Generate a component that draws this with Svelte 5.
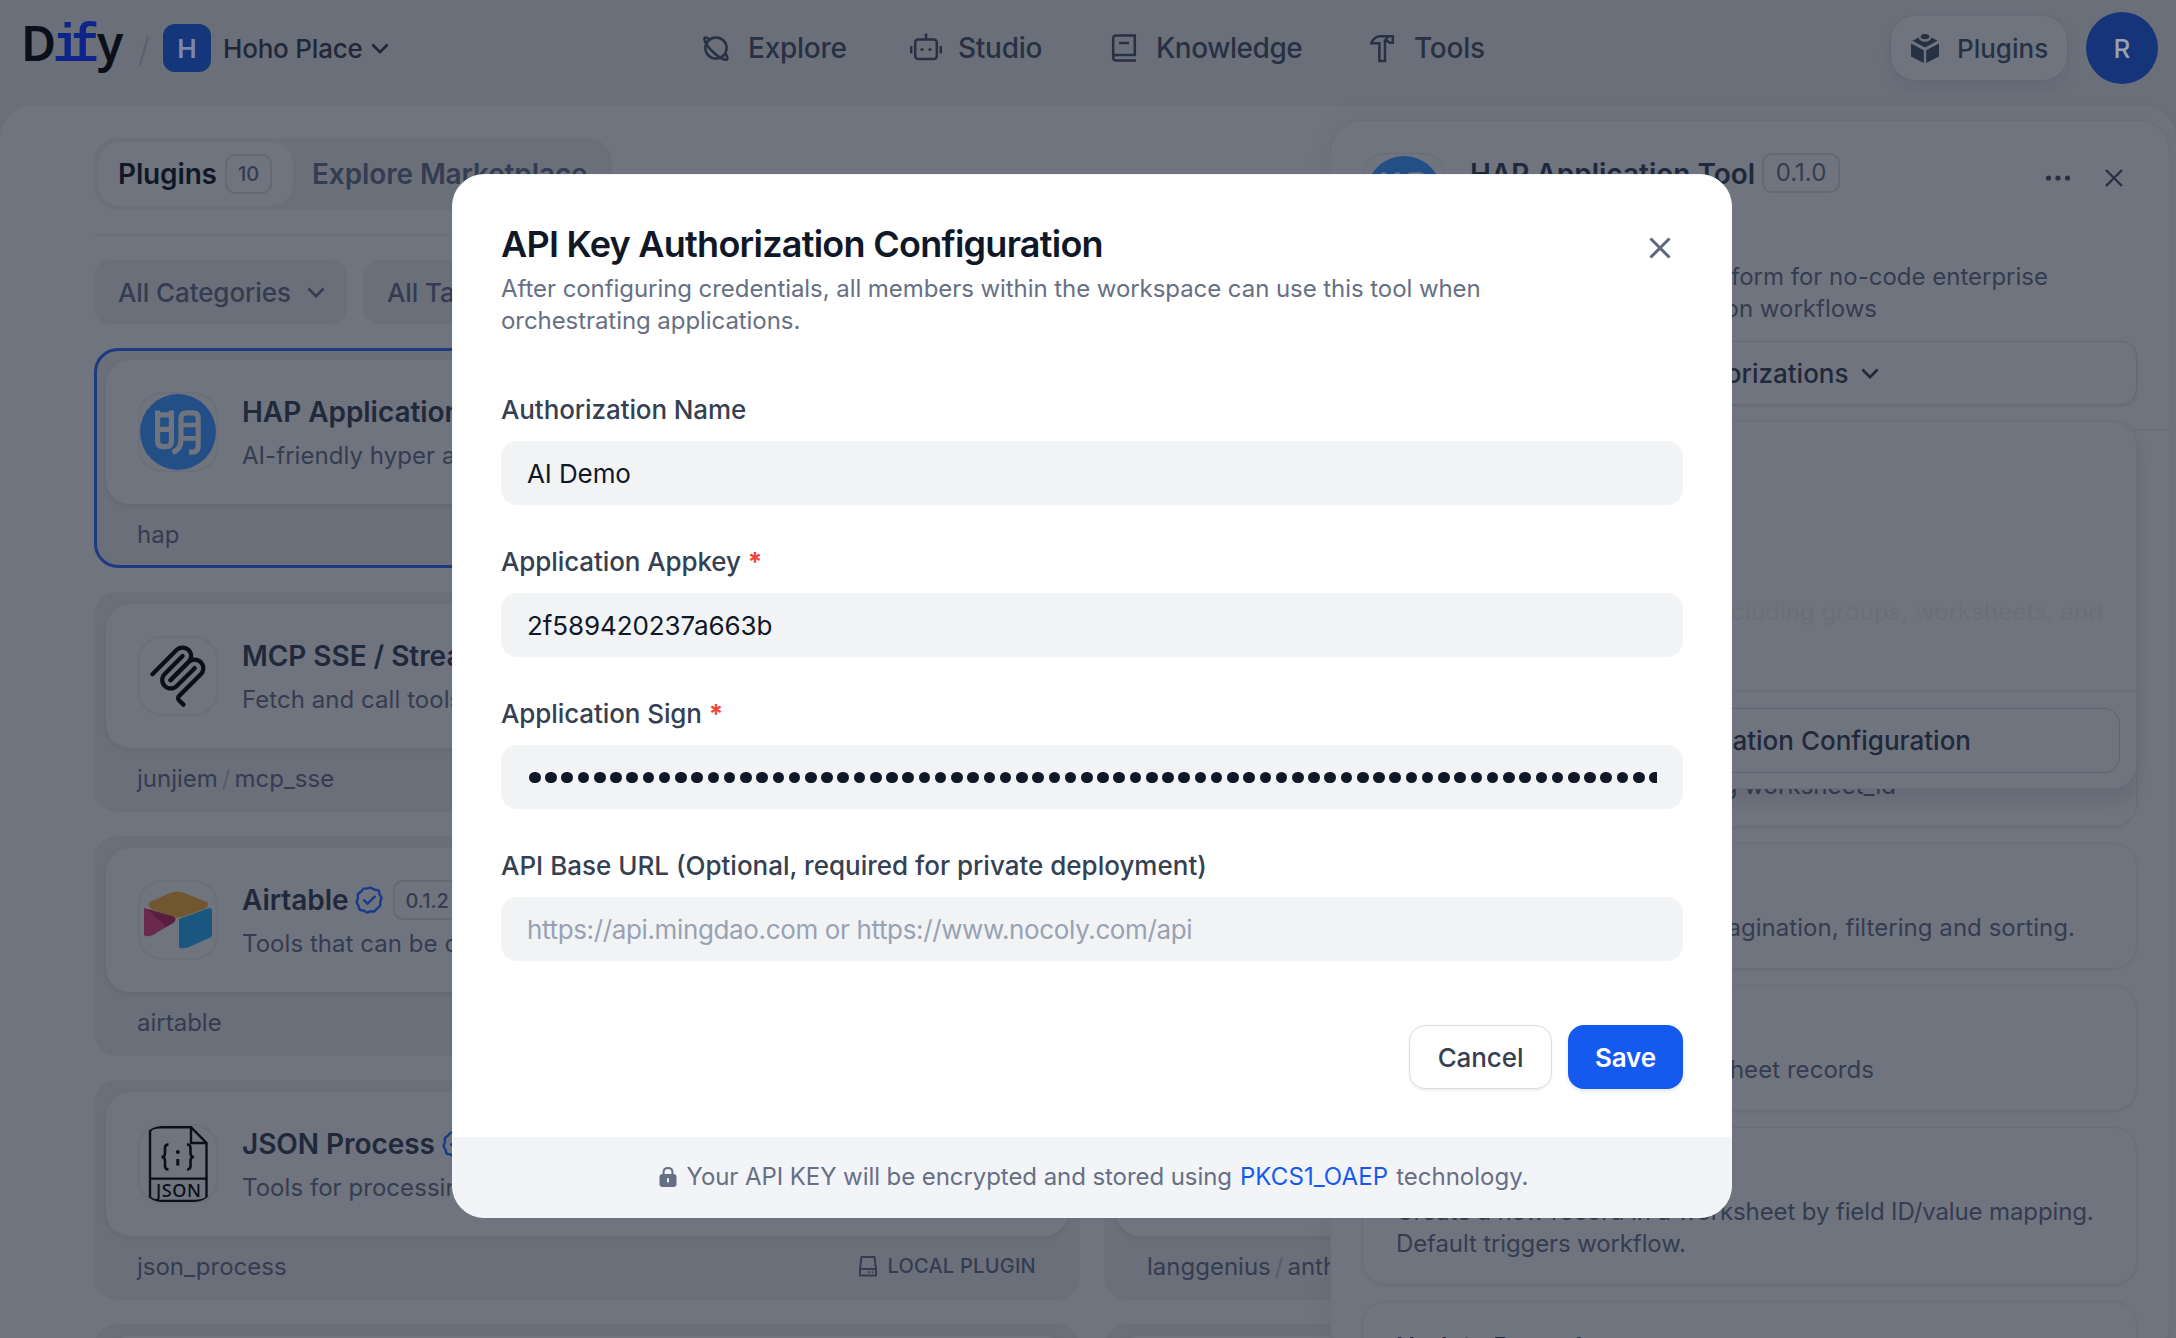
<script>
  const plugins = [
    { icon: 'hap', title: 'HAP Application Tool', version: '0.1.0', desc: 'AI-friendly hyper application platform', path: ['hap'], active: true },
    { icon: '', title: 'OpenAI', version: '0.2.3', desc: 'Models provided by OpenAI', path: ['langgenius', 'openai'] },
    { icon: 'mcp', title: 'MCP SSE / StreamableHTTP', version: '0.2.2', desc: 'Fetch and call tools from MCP servers', path: ['junjiem', 'mcp_sse'] },
    { icon: '', title: 'Gemini', version: '0.2.8', desc: 'Models provided by Google', path: ['langgenius', 'gemini'] },
    { icon: 'airtable', title: 'Airtable', verified: true, version: '0.1.2', desc: 'Tools that can be operated on Airtable', path: ['airtable'] },
    { icon: '', title: 'DeepSeek', version: '0.0.6', desc: 'Models provided by DeepSeek', path: ['langgenius', 'deepseek'] },
    { icon: 'json', title: 'JSON Process', verified: true, version: '0.0.2', desc: 'Tools for processing JSON content', path: ['json_process'], local: true },
    { icon: '', title: 'Anthropic', version: '0.1.1', desc: 'Models provided by Anthropic', path: ['langgenius', 'anthropic'] },
    { icon: '', title: '', version: '', desc: '', path: [] },
    { icon: '', title: '', version: '', desc: '', path: [] }
  ];
  const actions = [
    { title: 'Get Worksheet Structure', lines: ['Get the field structure of a worksheet,', 'including worksheet_id'], end: 1895 },
    { title: 'Query Records', lines: ['List records with pagination, filtering and sorting.'], end: 2074 },
    { title: 'Count Records', lines: ['Get the total number of worksheet records'], end: 1873 },
    { title: 'Create Record', lines: ['Create a new record in a worksheet by field ID/value mapping.', 'Default triggers workflow.'] },
    { title: 'Update Record', lines: ['Update fields of a record.'] }
  ];
  const dots = Array.from({ length: 70 });
</script>

{#snippet chevron()}
  <svg class="chev" viewBox="0 0 24 24" width="28" height="28"><path d="M5.5 9 L12 15.5 L18.5 9" /></svg>
{/snippet}

{#snippet hapIcon()}
  <svg viewBox="0 0 76 76" width="76" height="76">
    <circle cx="38" cy="38" r="38" fill="#244f86" />
    <g fill="none" stroke="#70747e" stroke-width="5.2">
      <path d="M17.6 16.5 V47 Q17.6 52.6 23 52.6 H26 Q31.4 52.6 31.4 47 V16.5" />
      <path d="M15.5 20.8 H33.5 M18 35.4 H31" />
      <path d="M32.5 58.4 Q41 55.5 41 46 V24.5 Q41 18.8 46.4 18.8 H53 Q58.2 18.8 58.2 24.5 V52 Q58.2 58 52 58.2 H49" />
      <path d="M41 31 H58 M41 44.4 H58" stroke-width="4.6" />
    </g>
  </svg>
{/snippet}

{#snippet verified()}
  <svg class="verified" viewBox="0 0 28 28" width="28" height="28">
    <path d="M14 1.9 Q16.4 1.2 18 3 Q20 4.1 21.9 3.9 Q24.4 4.2 24.2 6.8 Q24.4 8.8 25.7 10.3 Q27.2 12.2 25.8 14 Q24.9 15.9 25.3 18 Q25.6 20.5 23.3 21.4 Q21.5 22.5 20.6 24.2 Q19.3 26.3 17 25.4 Q15.4 25 14 25.9 Q11.9 27.2 10.2 25.5 Q8.8 24.2 6.8 24.2 Q4.3 24.2 3.9 21.8 Q3.9 19.9 2.6 18.1 Q1 16.2 2.3 14 Q3.3 12.1 2.8 10.2 Q2.4 7.7 4.6 6.6 Q6.5 5.5 7.4 3.9 Q8.9 1.8 11.2 2.6 Q12.8 2.8 14 1.9 Z" />
    <path d="M8.4 13.6 L12.6 17.6 L20.4 9.8" />
  </svg>
{/snippet}

{#snippet pluginIcon(name)}
  {#if name === 'hap'}
    {@render hapIcon()}
  {:else if name === 'mcp'}
    <svg viewBox="0 0 180 180" width="64" height="64" fill="none" stroke="#0a0f1a" stroke-width="12" stroke-linecap="round">
      <path d="M18 84.85 L85.88 16.97 C95.25 7.6 110.45 7.6 119.82 16.97 C129.2 26.34 129.2 41.54 119.82 50.91 L68.56 102.18" />
      <path d="M69.27 101.47 L119.82 50.91 C129.2 41.54 144.39 41.54 153.77 50.91 L154.12 51.27 C163.49 60.64 163.49 75.83 154.12 85.21 L92.72 146.6 C89.6 149.72 89.6 154.79 92.72 157.91 L105.33 170.52" />
      <path d="M102.85 33.94 L52.65 84.15 C43.28 93.52 43.28 108.71 52.65 118.09 C62.02 127.46 77.22 127.46 86.59 118.09 L136.79 67.88" />
    </svg>
  {:else if name === 'airtable'}
    <svg viewBox="0 0 76 76" width="76" height="76">
      <path d="M10 20 Q7 23 11 27 L32 35 Q37 36.5 42 35 L64 27 Q70 24 67 20 L44 11 Q37 8.500 30 11 Z" fill="#70572f" />
      <path d="M4 26 L33 34.500 Q38 37 33 41 L13 53 Q4 56 4 52 Z" fill="#6a2a4e" />
      <path d="M7 27 L33 34.500 Q38 37 33 41 L26 45 Z" fill="#571f3d" />
      <path d="M39 37 L69 26 Q72 26 72 29 V52 Q72 55 69 56 L49 65 Q39 68 39 64 Z" fill="#1a5680" />
    </svg>
  {:else if name === 'json'}
    <svg viewBox="0 0 76 76" width="76" height="76" fill="none" stroke="#0a0f1a" stroke-width="2.4">
      <path d="M10 72 V5 Q12 1.200 20 1.200 H51 L66.500 17 V72 Q62 75 56 75 H20 Q14 75 10 72 Z" />
      <path d="M51 1.200 V17 H66.500 M10 52.600 H66.500" />
      <path d="M28.500 18.500 Q25 18.500 25 22 V27 Q25 31 21.500 31 Q25 31 25 35 V40 Q25 43.500 28.500 43.500 M47 18.500 Q50.500 18.500 50.500 22 V27 Q50.500 31 54 31 Q50.500 31 50.500 35 V40 Q50.500 43.500 47 43.500" stroke-width="2.600" />
      <circle cx="37.800" cy="26" r="2" fill="#0a0f1a" stroke="none" />
      <path d="M37.800 33 V39.500" stroke-width="3" />
      <text x="16" y="71" class="json-label" textLength="45">JSON</text>
    </svg>
  {/if}
{/snippet}

<div class="page">
  <header>
    <div class="logo"><span class="d">D</span><span class="if">if</span><span class="y">y</span></div>
    <svg class="slash" viewBox="0 0 12 32" width="12" height="32"><path d="M10 2 L2 30" /></svg>
    <div class="ws-badge">H</div>
    <div class="ws-name">Hoho Place</div>
    {@render chevron()}

    <nav>
      <div class="nav-item explore">
        <svg viewBox="0 0 32 32" width="32" height="32">
          <circle cx="16" cy="16" r="10.600" />
          <path d="M10 7.500 Q4.500 3.600 4.300 7 Q4.800 12 13 20 Q21 27.500 26 27.800 Q29 27.400 25.500 21.500" />
        </svg>
        <span>Explore</span>
      </div>
      <div class="nav-item studio">
        <svg viewBox="0 0 32 32" width="32" height="32">
          <rect x="5.200" y="7.400" width="21.600" height="19.600" rx="3" />
          <path d="M16 7 V3 M1.200 14 V21.500 M30.800 14 V21.500" />
          <circle cx="16" cy="2.800" r="1.500" class="f" /><circle cx="12" cy="17.500" r="1.600" class="f" /><circle cx="20" cy="17.500" r="1.600" class="f" />
        </svg>
        <span>Studio</span>
      </div>
      <div class="nav-item knowledge">
        <svg viewBox="0 0 32 32" width="32" height="32">
          <path d="M28 28.500 H8 Q5.200 28.500 5.200 25.800 V6 Q5.200 3.400 8 3.400 H26.800 V23 H8 Q5.200 23 5.200 25.800 M11 10.900 H21" />
        </svg>
        <span>Knowledge</span>
      </div>
      <div class="nav-item tools">
        <svg viewBox="0 0 32 32" width="32" height="32">
          <path d="M5.200 10.800 Q9 4.200 14 4.200 H26.800 V10.800 H23.500 L21.500 9 H19 V29 H13.400 V11.200 H5.200 Z" />
          <path d="M18.500 9 L22 5" />
        </svg>
        <span>Tools</span>
      </div>
    </nav>

    <div class="plugins-btn">
      <svg viewBox="0 0 32 32" width="32" height="32">
        <path d="M2 11.500 L14.800 18.200 V31 L2 24.500 Z M30 11.500 L17.200 18.200 V31 L30 24.500 Z M3.500 8.800 L9.500 5.500 Q10.500 9.600 16 9.800 Q21.500 9.600 22.500 5.500 L28.500 8.800 L16 15.600 Z" />
        <ellipse cx="16" cy="4.600" rx="4.300" ry="2.700" />
      </svg>
      <span>Plugins</span>
    </div>
    <div class="avatar">R</div>
  </header>

  <main>
    <div class="tabs">
      <div class="tab on"><span class="tab-a">Plugins</span><span class="count">10</span></div>
      <div class="tab off">Explore Marketplace</div>
    </div>
    <div class="rule"></div>
    <div class="filters">
      <div class="filter"><span>All Categories</span>{@render chevron()}</div>
      <div class="filter"><span>All Tags</span>{@render chevron()}</div>
    </div>
    <div class="grid">
      {#each plugins as p}
        <article class:active={p.active}>
          <div class="inner">
            <div class="picon">{@render pluginIcon(p.icon)}</div>
            <div class="ptext">
              <div class="ptitle">
                <span>{p.title}</span>
                {#if p.verified}{@render verified()}{/if}
                {#if p.version}<span class="ver">{p.version}</span>{/if}
              </div>
              <div class="pdesc">{p.desc}</div>
            </div>
          </div>
          <footer>
            <span class="path">{#each p.path as part, i}{#if i}<i>/</i>{/if}<span>{part}</span>{/each}</span>
            {#if p.local}
              <span class="local">
                <svg viewBox="0 0 20 22" width="20" height="22"><path d="M2 14 L3.500 2 H16.500 L18 14 V20.500 H2 Z M2 14 H18" /><path d="M10 17.300 H11.600 M13.600 17.300 H15.200" /></svg>
                LOCAL PLUGIN
              </span>
            {/if}
          </footer>
        </article>
      {/each}
    </div>
  </main>

  <aside>
    <div class="dhead">
      <div class="dicon">{@render hapIcon()}</div>
      <div class="dtitle">HAP Application Tool</div>
      <span class="ver big">0.1.0</span>
      <div class="dtools">
        <svg viewBox="0 0 28 8" width="28" height="8"><circle cx="4.500" cy="4" r="2.600" /><circle cx="14" cy="4" r="2.600" /><circle cx="23.500" cy="4" r="2.600" /></svg>
        <svg class="x" viewBox="0 0 20 20" width="20" height="20"><path d="M2 2 L18 18 M18 2 L2 18" /></svg>
      </div>
    </div>
    <div class="ddesc">
      <div class="l1">AI-friendly hyper application platform for no-code enterprise</div>
      <div class="l2">development and automation workflows</div>
    </div>
    <div class="auth"><span>Authorizations</span>{@render chevron()}</div>
    <div class="drule"></div>
    <div class="actions">
      {#each actions as a}
        <section>
          <h4>{a.title}</h4>
          {#each a.lines as l}
            <p><span class:right={a.end} style:width={a.end ? `${a.end - 1395}px` : null}>{l}</span></p>
          {/each}
        </section>
      {/each}
    </div>
    <div class="pop">
      <div class="pop-body">Get application info, including groups, worksheets, and</div>
      <div class="pop-foot"><div class="pop-btn"><span>API Key Authorization Configuration</span></div></div>
    </div>
  </aside>

  <div class="modal" role="dialog">
    <div class="body">
      <div class="mhead">
        <div>
          <h2>API Key Authorization Configuration</h2>
          <div class="sub">After configuring credentials, all members within the workspace can use this tool when<br />orchestrating applications.</div>
        </div>
        <svg viewBox="0 0 24 24" width="24" height="24"><path d="M2.500 2.500 L21.500 21.500 M21.500 2.500 L2.500 21.500" /></svg>
      </div>
      <div class="label">Authorization Name</div>
      <div class="input">AI Demo</div>
      <div class="label">Application Appkey <b>*</b></div>
      <div class="input">2f589420237a663b</div>
      <div class="label">Application Sign <b>*</b></div>
      <div class="input"><div class="dots">{#each dots as _}<i></i>{/each}</div></div>
      <div class="label long">API Base URL (Optional, required for private deployment)</div>
      <div class="input ph">https://api.mingdao.com or https://www.nocoly.com/api</div>
      <div class="btns">
        <button class="cancel">Cancel</button>
        <button class="save">Save</button>
      </div>
    </div>
    <div class="mfoot">
      <svg viewBox="0 0 18 22" width="18" height="22"><path d="M4.600 9 V6 Q4.600 2 9 2 Q13.400 2 13.400 6 V9" fill="none" stroke="#676f83" stroke-width="2" /><rect x="0.500" y="8" width="17" height="13" rx="3" fill="#676f83" /><rect x="8" y="12" width="2" height="4.600" rx="1" fill="#f2f4f8" /></svg>
      <span class="f1">Your API KEY will be encrypted and stored using</span>
      <a href="#top">PKCS1_OAEP</a>
      <span class="f3">technology.</span>
    </div>
  </div>
</div>

<style>
  :global(body) { margin: 0; background: #6b6f7a; }
  * { box-sizing: border-box; }
  .page { position: relative; width: 2176px; height: 1338px; overflow: hidden; background: #6b6f7a; font-family: Inter, "Noto Sans", sans-serif; font-size: 26px; color: #343c51; white-space: nowrap; }

  .chev { flex: none; fill: none; stroke: currentColor; stroke-width: 2.3; }

  header { display: flex; align-items: center; height: 96px; padding: 0 18px 0 21px; color: #273144; }
  .logo { display: flex; align-items: baseline; width: 117px; height: 58px; line-height: 58px; font-size: 48px; color: #0a0f1a; margin-top: -11px; }
  .logo .d { font-family: "Noto Sans", sans-serif; font-weight: 600; width: 32px; }
  .logo .if { position: relative; font-family: "Liberation Mono", monospace; font-weight: 700; font-size: 54px; letter-spacing: -11px; width: 44px; color: #0f2488; transform: scaleX(0.85); transform-origin: left; }
  .logo .if::after { content: ""; position: absolute; left: 4px; width: 47px; bottom: 14.5px; height: 5px; background: #0f2488; }
  .logo .y { font-family: "Noto Sans", sans-serif; font-weight: 600; }
  .slash { fill: none; stroke: #5c616d; stroke-width: 2.4; margin-top: 6px; }
  .ws-badge { width: 48px; height: 48px; margin: 0 12px 0 13px; border-radius: 12px; background: #16367b; color: #7a89ab; font-weight: 600; font-size: 26px; line-height: 50px; text-align: center; }
  .ws-name { width: 143px; font-weight: 500; color: #1f2839; font-size: 26px; letter-spacing: -0.2px; }
  header > .chev { color: #1f2839; }
  nav { display: flex; align-items: center; margin-left: 306px; height: 40px; font-weight: 500; font-size: 28px; letter-spacing: -0.25px; }
  .nav-item { display: flex; align-items: center; gap: 16px; }
  .nav-item svg { fill: none; stroke: currentColor; stroke-width: 2.5; }
  .nav-item .f { fill: currentColor; stroke: none; }
  .explore { width: 210px; } .studio { width: 198px; } .knowledge { width: 258px; letter-spacing: -0.45px; } .tools { width: 160px; }
  .plugins-btn { display: flex; align-items: center; gap: 16px; margin-left: auto; width: 176px; height: 64px; padding-left: 18px; border-radius: 24px; background: #70747e; box-shadow: 0 8px 16px rgba(16, 24, 40, 0.07), 0 0 2px rgba(16, 24, 40, 0.1); font-weight: 500; }
  .plugins-btn svg { fill: currentColor; }
  .avatar { width: 72px; height: 72px; margin-left: 19px; border-radius: 50%; background: #163479; color: #9aa0b0; font-weight: 500; line-height: 73px; text-align: center; }

  main { margin-top: 10px; height: 1232px; padding: 32px 0 0 94px; border-radius: 32px 32px 0 0; background: #70747e; overflow: hidden; }
  .tabs { display: flex; align-items: center; width: 518px; height: 72px; padding: 4px; border-radius: 24px; background: #6b6f79; font-weight: 600; font-size: 28px; }
  .tab.on { display: flex; align-items: center; width: 195px; height: 64px; padding-left: 20px; border-radius: 22px; background: #70747e; color: #101828; }
  .tab-a { width: 107px; letter-spacing: -0.15px; }
  .count { width: 47px; height: 40px; border: 2px solid #646974; border-radius: 10px; font-size: 20px; font-weight: 500; line-height: 37px; text-align: center; color: #343c51; }
  .tab.off { margin-left: 19px; letter-spacing: -0.12px; }
  .rule { width: 1980px; height: 2px; margin-top: 24px; background: #6b6f79; }
  .filters { display: flex; gap: 16px; margin-top: 24px; font-weight: 500; letter-spacing: -0.1px; }
  .filter { display: flex; align-items: center; justify-content: space-between; width: 253px; height: 64px; padding: 0 17px 0 24px; border-radius: 16px; background: #6b6f79; }
  .grid { display: grid; grid-template-columns: 986px 986px; grid-auto-rows: 220px; gap: 24px; margin-top: 24px; }
  article { position: relative; padding: 12px; border-radius: 24px; background: #6b6f79; }
  article.active { padding: 9px; border: 3px solid #1e3a84; }
  .inner { display: flex; gap: 24px; width: 962px; height: 144px; padding: 32px; border-radius: 24px; background: #70747e; box-shadow: 0 2px 5px rgba(16, 24, 40, 0.08); }
  .picon { flex: none; display: flex; align-items: center; justify-content: center; width: 80px; height: 80px; border: 2px solid #6b6f79; border-radius: 24px; overflow: hidden; }
  .json-label { font: 500 18px "Noto Sans", sans-serif; fill: #0a0f1a; stroke: none; }
  .ptitle { display: flex; align-items: center; height: 40px; font-size: 28px; font-weight: 600; color: #1f293b; letter-spacing: -0.05px; }
  .verified { margin-left: 7px; fill: none; stroke: #173a8a; stroke-width: 2.4; }
  .ver { height: 40px; margin-left: 10px; padding: 0 10px; border: 2px solid #646974; border-radius: 10px; font-size: 20px; font-weight: 500; line-height: 38px; letter-spacing: 0; color: #343c51; }
  .pdesc { margin-top: 8px; font-size: 24px; line-height: 32px; letter-spacing: 0.05px; }
  article footer { display: flex; align-items: center; justify-content: space-between; height: 60px; padding: 0 32px 0 31px; font-size: 24px; }
  .path { letter-spacing: 0; }
  .path i { margin: 0 4px; font-style: normal; color: #575d6b; }
  .local { display: flex; align-items: center; gap: 9px; font-size: 20px; font-weight: 500; letter-spacing: 0.25px; }
  .local svg { fill: none; stroke: currentColor; stroke-width: 2; }

  aside { position: absolute; left: 1330px; top: 120px; width: 840px; height: 1240px; border: 1px solid #6a6e79; border-radius: 32px; background: #70747e; box-shadow: 0 0 30px rgba(16, 24, 40, 0.05); padding: 32px 32px 0 31px; }
  .dhead { display: flex; align-items: flex-start; height: 108px; }
  .dicon { flex: none; width: 84px; height: 84px; padding: 2px 3px; border: 1px solid #686c77; border-radius: 24px; overflow: hidden; }
  .dtitle { width: 281px; margin-left: 24px; margin-right: 1px; line-height: 42px; font-size: 28px; font-weight: 600; color: #1f293b; text-align: right; }
  .ver.big { width: 78px; padding: 0; text-align: center; font-size: 24px; line-height: 36px; font-weight: 400; }
  .dtools { display: flex; align-items: center; gap: 32px; margin-left: auto; height: 50px; padding-right: 13px; }
  .dtools svg { fill: #273144; }
  .dtools .x { fill: none; stroke: #273144; stroke-width: 2.3; }
  .ddesc { font-size: 24px; line-height: 32px; }
  .l1 { width: 686px; display: flex; justify-content: flex-end; }
  .l2 { width: 515px; display: flex; justify-content: flex-end; }
  .auth { display: flex; align-items: center; justify-content: center; gap: 7px; height: 64px; margin-top: 16px; width: 775px; padding-left: 33px; border: 1px solid #646974; border-radius: 16px; color: #1f293b; font-weight: 500; box-shadow: 0 1px 3px rgba(16, 24, 40, 0.1); }
  .auth span { width: 200px; text-align: right; }
  .drule { height: 2px; margin: 24px -32px 0 -31px; background: #6b6f79; }
  .actions { display: flex; flex-direction: column; gap: 16px; padding-top: 238px; }
  section { width: 775px; padding: 25px 33px 24px; border: 1px solid #696d78; border-radius: 24px; box-shadow: 0 1px 3px rgba(16, 24, 40, 0.06); }
  h4 { margin: 0 0 3px; height: 40px; line-height: 40px; font-size: 26px; font-weight: 600; color: #1f293b; }
  p { margin: 0; font-size: 24px; line-height: 32px; letter-spacing: -0.12px; }
  p .right { display: flex; justify-content: flex-end; letter-spacing: 0.05px; }
  .pop { position: absolute; left: 31px; top: 300px; width: 775px; height: 368px; border: 1px solid #696d78; border-radius: 24px; background: #70747e; box-shadow: 0 12px 18px rgba(16, 24, 40, 0.1); }
  .pop-body { height: 270px; padding: 174px 33px 0 0; border-bottom: 2px solid #6b6f79; font-size: 24px; line-height: 32px; letter-spacing: 0.05px; color: #6b6f79; text-align: right; }
  .pop-foot { padding: 16px; }
  .pop-btn { height: 65px; border: 1px solid #5f6470; border-radius: 16px; color: #1f293b; font-weight: 500; line-height: 64px; padding-right: 148px; text-align: right; }

  .modal { position: absolute; left: 452px; top: 174px; width: 1280px; height: 1044px; border-radius: 32px; background: #fff; overflow: hidden; border: 1px solid #f5f6f8; }
  .body { height: 962px; padding: 48px 48px 0; }
  .mhead { display: flex; justify-content: space-between; height: 168px; }
  .mhead svg { margin: 13px 11px 0 0; fill: none; stroke: #5f6880; stroke-width: 3; }
  h2 { margin: 0; line-height: 42px; font-size: 36px; font-weight: 600; letter-spacing: -0.74px; color: #101828; }
  .sub { font-size: 24px; line-height: 32px; color: #676f83; margin-top: 8px; letter-spacing: -0.065px; }
  .label { height: 36px; line-height: 36px; font-weight: 500; color: #354052; margin-bottom: 13px; letter-spacing: -0.1px; }
  .label.long { letter-spacing: 0; }
  .label b { color: #f04438; font-weight: 700; }
  .input { height: 64px; margin-bottom: 39px; padding: 0 26px; border-radius: 16px; background: #f1f3f5; color: #101828; line-height: 65px; letter-spacing: -0.1px; }
  .input.ph { color: #98a2b3; letter-spacing: -0.36px; }
  .mhead + .label { margin-top: 1px; }
  .dots { display: flex; align-items: center; gap: 4.650px; height: 65px; overflow: hidden; padding-left: 2px; }
  .dots i { flex: none; width: 11.600px; height: 11.600px; border-radius: 50%; background: #101828; }
  .btns { display: flex; justify-content: flex-end; gap: 16px; padding-top: 25px; }
  button { height: 64px; padding: 0; border-radius: 16px; font: 500 26px Inter, sans-serif; letter-spacing: -0.1px; }
  .cancel { width: 143px; border: 1px solid #d9dce2; background: #fff; color: #354052; box-shadow: 0 2px 3px rgba(16, 24, 40, 0.06); }
  .save { width: 115px; border: 0; background: #155aef; color: #fff; font-weight: 600; box-shadow: 0 2px 4px rgba(16, 24, 40, 0.12); }
  .mfoot { display: flex; align-items: center; justify-content: center; height: 79px; padding-left: 3px; background: #f2f4f8; color: #676f83; font-size: 24px; box-shadow: 0 4px 0 #f2f4f8; }
  .mfoot svg { margin-right: 10px; }
  .mfoot .f1 { letter-spacing: -0.07px; }
  .mfoot a { margin: 0 8px; color: #155aef; text-decoration: none; letter-spacing: 0.1px; }
</style>
